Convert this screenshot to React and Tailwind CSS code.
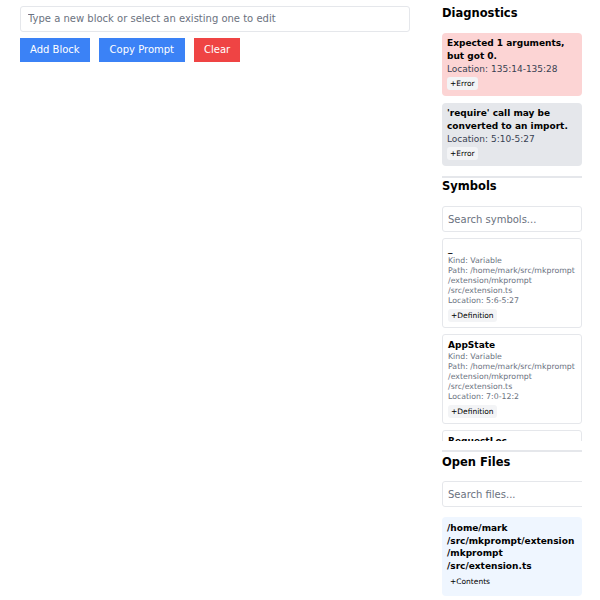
import React, { useState } from "react";

const diagnostics = [
    { message: "Expected 1 arguments, but got 0.", location: "135:14-135:28", severity: "error" },
    { message: "'require' call may be converted to an import.", location: "5:10-5:27", severity: "hint" },
];

const symbols = [
    { name: "_", kind: "Variable", path: ["/home/mark/src/mkprompt", "/extension/mkprompt", "/src/extension.ts"], location: "5:6-5:27" },
    { name: "AppState", kind: "Variable", path: ["/home/mark/src/mkprompt", "/extension/mkprompt", "/src/extension.ts"], location: "7:0-12:2" },
    { name: "RequestLoc", kind: "Variable", path: ["/home/mark/src/mkprompt"], location: "14:0-14:9" },
];

const files = [["/home/mark", "/src/mkprompt/extension", "/mkprompt", "/src/extension.ts"]];

const App = () => {
    const [block, setBlock] = useState("");

    return (
        <div className="flex h-[600px] w-[600px] overflow-hidden bg-white text-black" style={{ fontFamily: '"DejaVu Sans", sans-serif' }}>
            {/* Editor */}
            <div className="w-[430px] shrink-0 px-5 pt-[5px]">
                <input
                    value={block}
                    onChange={(e) => setBlock(e.target.value)}
                    placeholder="Type a new block or select an existing one to edit"
                    className="w-full h-[26px] px-[7px] text-[10px] border border-[#e5e7eb] rounded-[3px] outline-none placeholder:text-[#6b7280]"
                />
                <div className="flex gap-[9px] mt-[6px]">
                    <button className="h-[24px] px-[10px] text-[10px] text-white bg-[#3b82f6]">Add Block</button>
                    <button className="h-[24px] px-[11px] text-[10px] text-white bg-[#3b82f6]">Copy Prompt</button>
                    <button className="h-[24px] px-[10px] text-[10px] text-white bg-[#ef4444]">Clear</button>
                </div>
            </div>

            {/* Sidebar */}
            <div className="w-[140px] ml-3 flex flex-col">
                <h2 className="text-[11.5px] font-bold leading-[17px] mt-[5px] mb-[11px]">Diagnostics</h2>
                <div className="flex flex-col gap-[7px]">
                    {diagnostics.map((d, i) => (
                        <div
                            key={i}
                            className={`rounded-[4px] px-[5px] pt-[4px] pb-[6px] ${d.severity === "error" ? "bg-[#fcd4d4]" : "bg-[#e5e7eb]"}`}
                        >
                            <div className="text-[9px] font-bold leading-[13px]">{d.message}</div>
                            <div className="text-[9px] leading-[13px] text-[#374151]">Location: {d.location}</div>
                            <span className="block w-fit mt-[1px] px-[3px] rounded-[3px] bg-[#f3f4f6] text-[7.5px] leading-[13px]">+Error</span>
                        </div>
                    ))}
                </div>

                <div className="border-t-2 border-[#e5e7eb] mt-[10px]" />
                <h2 className="text-[11.5px] font-bold leading-[17px] mb-[11px]">Symbols</h2>
                <input
                    placeholder="Search symbols..."
                    className="h-[26px] px-[5px] text-[10px] border border-[#e5e7eb] rounded-[3px] outline-none placeholder:text-[#6b7280]"
                />
                <div className="mt-[6px] h-[203px] overflow-hidden flex flex-col gap-[6px]">
                    {symbols.map((s, i) => (
                        <div key={i} className="shrink-0 border border-[#e5e7eb] rounded-[3px] px-[5px] pt-[4px] pb-[5px]">
                            <div className="text-[9px] font-bold leading-[13px]">{s.name}</div>
                            <div className="text-[7.8px] leading-[10px] text-[#6b7280]">Kind: {s.kind}</div>
                            {s.path.map((p, j) => (
                                <div key={j} className="text-[7.8px] leading-[10px] text-[#6b7280] whitespace-nowrap">
                                    {j === 0 ? `Path: ${p}` : p}
                                </div>
                            ))}
                            <div className="text-[7.8px] leading-[10px] text-[#6b7280]">Location: {s.location}</div>
                            <span className="block w-fit mt-[3px] px-[3px] rounded-[3px] bg-[#f3f4f6] text-[7.5px] leading-[13px]">+Definition</span>
                        </div>
                    ))}
                </div>

                <div className="border-t-2 border-[#e5e7eb] mt-[9px]" />
                <h2 className="text-[11.5px] font-bold leading-[17px] mt-[2px] mb-[10px]">Open Files</h2>
                <div className="overflow-hidden">
                    <input
                        placeholder="Search files..."
                        className="block h-[26px] w-[170px] px-[5px] text-[10px] border border-[#e5e7eb] rounded-[3px] outline-none placeholder:text-[#6b7280]"
                    />
                </div>
                <div className="mt-[10px] flex flex-col gap-[6px]">
                    {files.map((f, i) => (
                        <div key={i} className="rounded-[4px] bg-[#eff6ff] px-[5px] pt-[5px] pb-[8px]">
                            <div className="text-[9px] font-bold leading-[12.7px]">
                                {f.map((p, j) => (
                                    <div key={j}>{p}</div>
                                ))}
                            </div>
                            <span className="block w-fit mt-[2px] px-[3px] text-[7.5px] leading-[13px]">+Contents</span>
                        </div>
                    ))}
                </div>
            </div>
        </div>
    );
};

export default App;
